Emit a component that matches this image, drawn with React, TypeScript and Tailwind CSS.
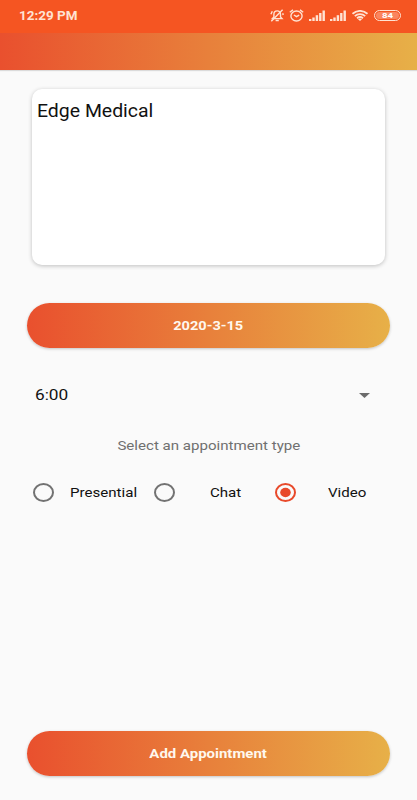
import { useState } from "react";
import clsx from "clsx";

const TYPES = [
  { label: "Presential", radio: "ml-[33px]", text: "ml-[16px] w-[67px]" },
  { label: "Chat", radio: "ml-[17px]", text: "ml-[35px] w-[31px]" },
  { label: "Video", radio: "ml-[34px]", text: "ml-[32px] w-[38px]" },
];

function Signal() {
  return (
    <svg className="h-[11px] w-4" viewBox="0 0 16 11" fill="currentColor">
      <rect x="0" y="9" width="2.4" height="2" />
      <rect x="3.3" y="7.5" width="2.4" height="3.5" />
      <rect x="6.7" y="5.2" width="2.4" height="5.8" />
      <rect x="10.1" y="3" width="2.4" height="8" />
      <rect x="13.5" y="0.5" width="2.4" height="10.5" />
    </svg>
  );
}

function StatusBar() {
  return (
    <div className="flex h-[33px] items-start bg-[#f55522] pl-[19px] text-[#ffe3d3]">
      <span className="mt-[7px] w-[237px] text-[12px] leading-[18px] font-bold">
        <span className="inline-block origin-left scale-x-[1.12]">12:29 PM</span>
      </span>
      <div className="mt-[9px] ml-[14px] flex h-[13px] items-center">
        <svg className="h-[13px] w-[14px]" viewBox="0 0 14 13" fill="none" stroke="currentColor" strokeWidth="1.4">
          <path d="M2.4 9.6h9.6L10.5 8V5.2C10.5 3.2 9.2 1.9 7.2 1.9S3.9 3.2 3.9 5.2V8L2.4 9.6Z" />
          <path d="M5.6 11.5h3.2M12.6.8 1.3 12.3M.9 5.2 2.3 2.3M13.2 6l-.5-1.7" />
        </svg>
        <svg className="ml-[5px] h-[13px] w-[15px]" viewBox="0 0 15 13" fill="none" stroke="currentColor" strokeWidth="1.4">
          <ellipse cx="7.5" cy="7" rx="5.6" ry="5" />
          <path d="M4.9 6 7.5 7.7l2.7-1.5M.8 3.3 4 .9M14.2 3.3 11 .9" />
        </svg>
        <div className="ml-[5px]"><Signal /></div>
        <div className="ml-[5px]"><Signal /></div>
        <svg className="ml-[6px] h-[11px] w-4" viewBox="0 0 16 11" fill="none" stroke="currentColor" strokeWidth="1.8">
          <path d="M.5 3.8C4.8-.1 11.2-.1 15.5 3.8M2.8 6.1c3-2.7 7.4-2.7 10.4 0M5 8.3c1.8-1.5 4.2-1.5 6 0" />
          <path d="m6 9.3 2 1.7 2-1.7C8.9 8.3 7.1 8.3 6 9.3Z" fill="currentColor" stroke="none" />
        </svg>
        <div className="ml-[6px] flex h-[11px] w-[27px] items-center rounded-full border border-current p-px">
          <div className="flex h-full w-full items-center justify-center rounded-full bg-[#fa855f] text-[8px] leading-none font-bold text-white">
            <span className="scale-x-[1.2]">84</span>
          </div>
        </div>
      </div>
    </div>
  );
}

function GradientButton({ children }: { children: React.ReactNode }) {
  return (
    <button className="ml-[27px] flex h-[45px] w-[363px] items-center justify-center rounded-full bg-linear-to-r/srgb from-[#e9502e] to-[#e7b048] text-[13px] font-bold text-[#fff8ee] shadow-[0_1px_3px_rgba(0,0,0,0.22)]">
      {children}
    </button>
  );
}

function Radio({ checked }: { checked: boolean }) {
  return (
    <svg
      className={clsx("h-[19px] w-[21px]", checked ? "text-[#e8492a]" : "text-[#727272]")}
      viewBox="0 0 21 19"
      fill="none"
    >
      <ellipse cx="10.5" cy="9.5" rx="9.5" ry="8.5" stroke="currentColor" strokeWidth="2" />
      {checked && <ellipse cx="10.5" cy="9.5" rx="5.3" ry="4.7" fill="currentColor" />}
    </svg>
  );
}

export default function App() {
  const [type, setType] = useState("Video");

  return (
    <div className="flex h-[800px] w-[417px] flex-col overflow-hidden bg-[#fafafa] font-[Roboto,sans-serif] text-[#111]">
      <StatusBar />
      <div className="h-[37px] bg-linear-to-r/srgb from-[#e9502e] to-[#e7b048] shadow-[0_1px_1px_rgba(0,0,0,0.12)]" />

      <div className="mt-[19px] ml-8 h-[176px] w-[353px] rounded-[10px] bg-white pt-[10px] pl-[5px] shadow-[0_1px_4px_rgba(0,0,0,0.24)]">
        <p className="w-max origin-left scale-x-[1.08] text-[18px] leading-6">Edge Medical</p>
      </div>

      <div className="mt-[38px]">
        <GradientButton>
          <span className="scale-x-[1.12]">2020-3-15</span>
        </GradientButton>
      </div>

      <div className="mt-9 ml-[35px] flex h-[22px] w-[335px] items-center justify-between">
        <span className="origin-left scale-x-[1.15] text-[15px]">6:00</span>
        <svg className="h-[5px] w-[11px]" viewBox="0 0 11 5">
          <path d="M0 0h11L5.5 5Z" fill="#6b6b6b" />
        </svg>
      </div>

      <p className="mt-[30px] flex h-5 items-center justify-center text-[13px] text-[#707070]">
        <span className="scale-x-[1.16]">Select an appointment type</span>
      </p>

      <div className="mt-[26px] flex h-5 items-center">
        {TYPES.map((t) => (
          <button key={t.label} className="flex items-center" onClick={() => setType(t.label)}>
            <span className={t.radio}>
              <Radio checked={type === t.label} />
            </span>
            <span className={clsx("pt-[2px] text-left text-[13px]", t.text)}>
              <span className="inline-block origin-left scale-x-[1.16]">{t.label}</span>
            </span>
          </button>
        ))}
      </div>

      <div className="mt-auto mb-6">
        <GradientButton>
          <span className="scale-x-[1.15] pt-px">Add Appointment</span>
        </GradientButton>
      </div>
    </div>
  );
}
